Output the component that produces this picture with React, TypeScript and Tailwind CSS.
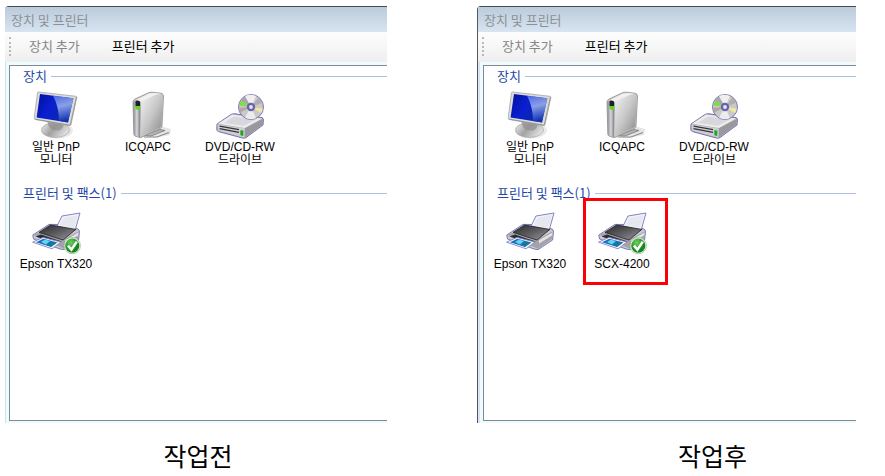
import React from 'react';
import clsx from 'clsx';

type IconName = 'monitor' | 'computer' | 'drive' | 'printer';

interface Device {
  name: string[];
  icon: IconName;
  isDefault?: boolean;
  highlighted?: boolean;
}

const devices: Device[] = [
  { name: ['일반 PnP', '모니터'], icon: 'monitor' },
  { name: ['ICQAPC'], icon: 'computer' },
  { name: ['DVD/CD-RW', '드라이브'], icon: 'drive' },
];

const printersBefore: Device[] = [
  { name: ['Epson TX320'], icon: 'printer', isDefault: true },
];

const printersAfter: Device[] = [
  { name: ['Epson TX320'], icon: 'printer' },
  { name: ['SCX-4200'], icon: 'printer', isDefault: true, highlighted: true },
];

// Gradients shared by all the icons
const IconDefs = () => (
  <svg width="0" height="0" className="absolute" aria-hidden="true">
    <defs>
      <linearGradient id="screen" x1="0" y1="0" x2="1" y2="0.5">
        <stop offset="0" stopColor="#0310a0" />
        <stop offset="0.5" stopColor="#0a1fd0" />
        <stop offset="1" stopColor="#0b2a9c" />
      </linearGradient>
      <linearGradient id="glare" x1="0" y1="0" x2="0.2" y2="1">
        <stop offset="0" stopColor="#5f83e6" />
        <stop offset="0.45" stopColor="#b4c8f7" />
        <stop offset="1" stopColor="#1536bc" />
      </linearGradient>
      <linearGradient id="silver" x1="0" y1="0" x2="1" y2="1">
        <stop offset="0" stopColor="#f2f2f2" />
        <stop offset="0.5" stopColor="#c6c6c6" />
        <stop offset="1" stopColor="#868686" />
      </linearGradient>
      <linearGradient id="side" x1="0" y1="0" x2="1" y2="0">
        <stop offset="0" stopColor="#8a8a90" />
        <stop offset="0.5" stopColor="#d9d9dc" />
        <stop offset="1" stopColor="#77777c" />
      </linearGradient>
      <linearGradient id="lid" x1="0" y1="0" x2="1" y2="1">
        <stop offset="0" stopColor="#2a2a2c" />
        <stop offset="0.5" stopColor="#5c5c60" />
        <stop offset="1" stopColor="#9a9a9e" />
      </linearGradient>
      <linearGradient id="base" x1="0" y1="0" x2="1" y2="0.4">
        <stop offset="0" stopColor="#f0f0f0" />
        <stop offset="0.5" stopColor="#a2a2a2" />
        <stop offset="1" stopColor="#dedede" />
      </linearGradient>
      <radialGradient id="badge" cx="0.4" cy="0.3">
        <stop offset="0" stopColor="#6cd15f" />
        <stop offset="1" stopColor="#16861c" />
      </radialGradient>
    </defs>
  </svg>
);

const MonitorIcon = () => (
  <svg width="48" height="48" viewBox="0 0 48 48" aria-hidden="true">
    <ellipse cx="25" cy="39.5" rx="16" ry="8" fill="#000" opacity="0.08" />
    <ellipse cx="23.5" cy="39" rx="14" ry="7.5" fill="url(#base)" stroke="#a9a9a9" strokeWidth="0.7" />
    <path d="M15 30 L32 33 Q31 38 27 39.5 Q20 40 17 36Z" fill="#8e8e8e" opacity="0.7" />
    <path d="M6.5 1 L44 5.3 Q45 5.5 44.8 6.5 L39 33.6 Q38.6 34.8 37.4 34.6 L3 28.4 Q2 28 2.2 27 L5.5 1.8 Q5.7 1 6.5 1Z" fill="#dcdcdc" stroke="#a5a5a5" strokeWidth="0.8" />
    <path d="M3.2 28.2 L38.2 34.2 L44.4 6" fill="none" stroke="#8c8c8c" strokeWidth="0.8" />
    <path d="M8 3 L41.4 7.2 L36 31.6 L4.6 26.4Z" fill="url(#screen)" />
    <path d="M21 4.7 L41.4 7.2 L36 31.6 L27 30 Q27 16 21 4.7Z" fill="url(#glare)" opacity="0.75" />
  </svg>
);

const ComputerIcon = () => (
  <svg width="48" height="48" viewBox="0 0 48 48" aria-hidden="true">
    <path d="M18 45 L36 35 L47 38 L46 44 L30 47Z" fill="#000" opacity="0.1" />
    <path d="M19 44.5 L36 38.5 L41 39.5 L27 45Z" fill="#b5b5b5" stroke="#6d6d6d" strokeWidth="0.7" />
    <path d="M20 46 H33 L45 41.5" fill="none" stroke="#8b8b8b" strokeWidth="1.2" />
    <path d="M9 11 Q9 9 11 8 L24 2 Q26 1 28 1.2 L37 2.2 Q39.5 2.8 39.5 5 L38 35 Q38 36.6 36.5 37.3 L18 46 Q16 47 14 46 L11 45 Q9.8 44.5 9.8 43Z" fill="#c9c9c9" stroke="#8d8d8d" strokeWidth="0.8" />
    <path d="M9.4 11 Q13 8.5 16.4 11.5 L16 46.2 L11 44.6 L10 43Z" fill="url(#side)" />
    <path d="M17 11 L32 3 Q38.5 2.5 38.8 5 L37.3 35 L36 36.6 L17 45.5Z" fill="url(#silver)" />
    <path d="M10 10 L25 2.5 Q31 1.5 37 3 Q32 3 29 5 L17 11 Q13 8.8 10 10Z" fill="#f1f1f1" />
    <path d="M11.5 9.8 Q14 9 16 10.5 V15 H11.5Z" fill="#1b2326" />
    <path d="M11.5 15 H16 V18 L13.5 19 L11.5 17.5Z" fill="#5ad61c" />
  </svg>
);

const DriveIcon = () => (
  <svg width="48" height="48" viewBox="0 0 48 48" aria-hidden="true">
    <path d="M1 33 L15 23.5 Q17 22.5 19 22.8 L46 26.6 Q47.5 27 47.4 29 L47 34 L30 46.6 Q28.5 47.6 26.5 47 L2.5 40.6 Q0.8 40 0.8 38Z" fill="#b6b6ba" stroke="#7573b5" strokeWidth="1" />
    <path d="M2 32.8 L16 23.6 L46 27.5 L29 37Z" fill="#ececee" />
    <path d="M8 32 L18 25.6 L40 28.5 L28 34.8Z" fill="#d8d8dc" />
    <path d="M29 37.2 L46.8 28 L46.5 33.6 L29 46.2Z" fill="#98989e" />
    <path d="M1.6 33.4 L28.6 37.6 L28.2 46.6 L2 39.6Z" fill="#cfcfd3" />
    <path d="M3.5 35.2 L23 38.6 M3.5 37.6 L23 41.4" stroke="#35353a" strokeWidth="1.3" />
    <path d="M24.4 39.2 L27.4 39.6 L27.2 45 L24.4 44.2Z" fill="#1ea51f" />
    <circle cx="35" cy="16" r="12.5" fill="#cbc9c8" stroke="#7b79bd" strokeWidth="1" />
    <path d="M35 16 L29 5.2 A12 12 0 0 1 40 5.2Z" fill="#efefef" />
    <path d="M35 16 L40 27 A12 12 0 0 1 29 26.5Z" fill="#ececec" />
    <path d="M35 16 L23.2 14.6 A12 12 0 0 1 25.2 9.4Z" fill="#7ede46" />
    <path d="M35 16 L25.2 9.4 A12 12 0 0 1 29 5.6Z" fill="#a9a7a7" />
    <path d="M35 16 L46.8 17.5 A12 12 0 0 1 45 22Z" fill="#f0e7a2" />
    <path d="M35 16 L24.3 21.5 A12 12 0 0 1 23 16.8Z" fill="#b5a3a5" />
    <path d="M35 16 L42.5 6.6 A12 12 0 0 1 46.2 11.8Z" fill="#b3adaf" />
    <circle cx="35" cy="16" r="4.2" fill="#6564ad" />
    <circle cx="35" cy="16" r="1.9" fill="#e6e6f6" />
  </svg>
);

const PrinterIcon = ({ checked }: { checked?: boolean }) => (
  <svg width="48" height="44" viewBox="0 0 48 44" className="overflow-visible" aria-hidden="true">
    <path d="M0.8 23 L17 12.4 L27 12.5 L46 17 Q47.5 17.6 47.4 20 L46.6 28 L32 37.6 L28 37 L1.5 27Z" fill="#c9c9ce" stroke="#7a78b8" strokeWidth="1" />
    <path d="M30 4 L48 1 L43.2 18.2 L25 14.2Z" fill="#f2f3f8" stroke="#8583c2" strokeWidth="1" />
    <path d="M31.5 5.8 L46 3.2 L42 16 L28 13Z" fill="#dfe2ea" opacity="0.7" />
    <path d="M1.6 23 L7 20.4 L30.5 28 L46.5 19.4 L46 27 L32 36.8 L28 35Z" fill="#a3a3a9" />
    <path d="M33 28.2 L46.5 20.6 L46 23.5 L33 31.6Z" fill="#e4e4e8" />
    <path d="M7 20.4 L18.6 13 L43.8 17.4 L31 28Z" fill="url(#lid)" stroke="#202022" strokeWidth="0.8" />
    <path d="M3.5 24.4 L9 22.5 L29.6 29.5 L25 32Z" fill="#2c2c30" />
    <path d="M0.6 30.2 L11 25.4 L29 30 L20 36.8Z" fill="#f5f6fb" stroke="#8583c2" strokeWidth="0.9" />
    <path d="M4 30.2 L11.4 26.8 L25.4 30.4 L19 35Z" fill="#1670c8" />
    <path d="M9 30 L13 27.6 L18 29 L14 32.6Z" fill="#63d5e6" />
    <path d="M17 33 L22 30 L24 31 L19 34.8Z" fill="#177f74" />
    {checked && (
      <g>
        <circle cx="40.3" cy="33.7" r="7.7" fill="url(#badge)" stroke="#e8f3e4" strokeWidth="1.2" />
        <circle cx="40.3" cy="33.7" r="8.2" fill="none" stroke="#86a583" strokeWidth="0.5" />
        <path d="M36 33.6 L39.4 37.6 L44.8 29.6" fill="none" stroke="#fff" strokeWidth="2.5" />
      </g>
    )}
  </svg>
);

const DeviceIcon = ({ device }: { device: Device }) => {
  switch (device.icon) {
    case 'monitor': return <MonitorIcon />;
    case 'computer': return <ComputerIcon />;
    case 'drive': return <DriveIcon />;
    default: return <PrinterIcon checked={device.isDefault} />;
  }
};

const DeviceTile = ({ device }: { device: Device }) => (
  <li className="relative w-[92px]">
    <button type="button" className="flex w-full flex-col items-center gap-[2px] font-['Liberation_Sans','Noto_Sans_CJK_KR',sans-serif] text-xs leading-[13px] text-black">
      <DeviceIcon device={device} />
      <span className="whitespace-nowrap">
        {device.name.map(line => <span key={line} className="block">{line}</span>)}
      </span>
    </button>
    {device.highlighted && (
      <span className="pointer-events-none absolute -top-[14px] right-0 -bottom-[14px] left-[7px] border-3 border-[#fb0008]" />
    )}
  </li>
);

const DeviceSection = ({ title, items }: { title: string; items: Device[] }) => (
  <section>
    <h2 className="flex items-center gap-1 pl-[13px] text-[13px] leading-5 text-[#1f47a8]">
      {title}
      <span className="h-px flex-1 bg-[#b0c1df]" />
    </h2>
    <ul className={clsx('flex', items[0].icon === 'printer' ? 'mt-[9px]' : 'mt-[5px]')}>
      {items.map(item => <DeviceTile key={item.name[0]} device={item} />)}
    </ul>
  </section>
);

interface DevicesWindowProps {
  caption: string;
  printers: Device[];
  edged?: boolean;
}

const DevicesWindow = ({ caption, printers, edged }: DevicesWindowProps) => (
  <figure>
    <div className={clsx('rounded-tl border-t border-t-[#434a50] bg-[#effcff]', edged ? 'border-l border-l-[#55565e]' : '')}>
      <h1 className="bg-linear-to-b from-[#bccbd9] to-[#d7e5f2] pl-[6px] text-[13px] leading-[25px] text-[#8b9095]">장치 및 프린터</h1>
      <div className="flex h-[30px] items-center bg-linear-to-b from-[#fdfdfd] to-[#efefef] pb-[2px] pl-1 text-[13px]">
        <span className="h-[19px] border-l-2 border-dotted border-[#b9b9b9]" />
        <button type="button" className="ml-[18px] text-[#858585]">장치 추가</button>
        <button type="button" className="ml-8 text-black">프린터 추가</button>
      </div>
      <div className={clsx('pt-[3px] pb-[2px]', edged ? 'border-l-2 border-[#d9e4f2] pl-[3px]' : 'border-l border-[#cfe0f0] pl-[3px]')}>
        <div className="min-h-[356px] space-y-4 border border-r-0 border-[#7d8b95] bg-white">
          <DeviceSection title="장치" items={devices} />
          <DeviceSection title="프린터 및 팩스(1)" items={printers} />
        </div>
      </div>
    </div>
    <figcaption className={clsx('mt-[14px] text-center text-[25px] leading-9 text-black', edged ? 'pl-[92px]' : 'pl-1')}>{caption}</figcaption>
  </figure>
);

const App: React.FC = () => (
  <main className="min-h-screen bg-white font-['Noto_Sans_CJK_KR',sans-serif]">
    <IconDefs />
    <div className="grid grid-cols-[382fr_379fr] gap-[90px] pt-[6px] pr-[29px] pl-[5px]">
      <DevicesWindow caption="작업전" printers={printersBefore} />
      <DevicesWindow caption="작업후" printers={printersAfter} edged />
    </div>
  </main>
);

export default App;
